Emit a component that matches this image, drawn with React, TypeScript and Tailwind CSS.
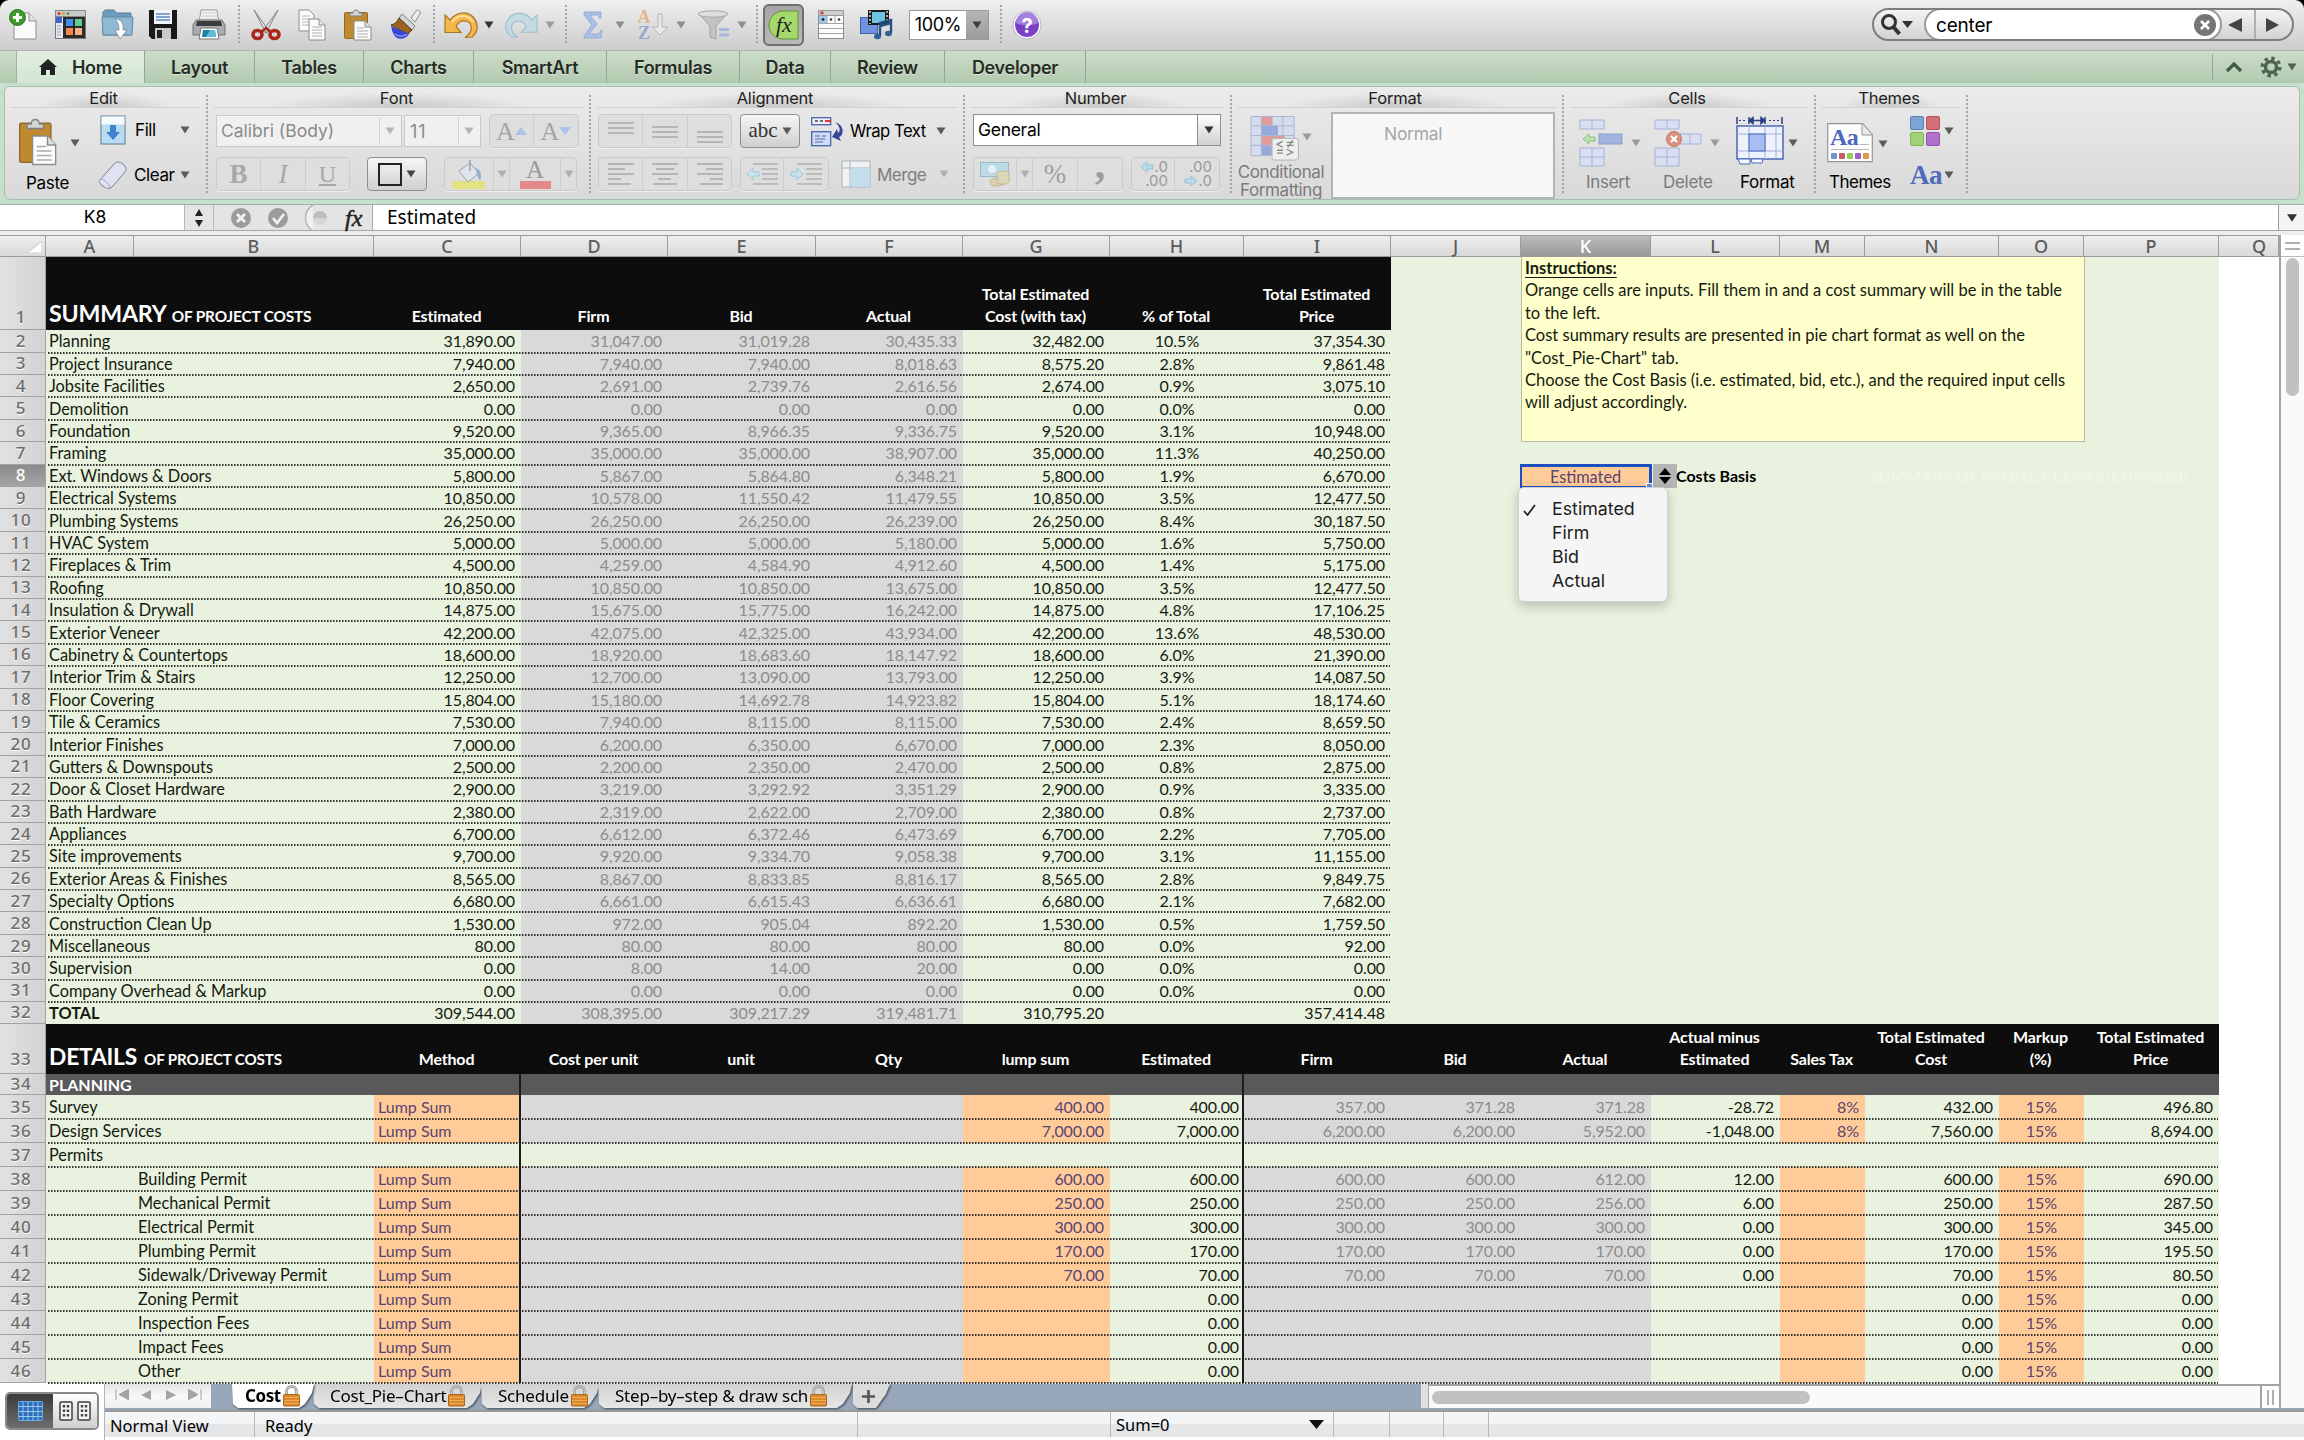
import type { ReactNode } from "react";
import { clsx } from "clsx";

const UI = "font-['Inter',sans-serif]";
const LUCIDA = "font-['Noto_Sans',sans-serif]";
const BODY = "font-['Lato',sans-serif]";

const GRID =
  "grid grid-rows-[100%] grid-cols-[46px_88px_240px_147px_147px_148px_147px_147px_134px_147px_130px_130px_129px_85px_134px_85px_135px_60px]";

const LETTERS = "ABCDEFGHIJKLMNOPQ".split("");

// label, estimated, firm, bid, actual, total cost, % of total, total price
const SUMMARY: string[][] = [
  ["Planning", "31,890.00", "31,047.00", "31,019.28", "30,435.33", "32,482.00", "10.5%", "37,354.30"],
  ["Project Insurance", "7,940.00", "7,940.00", "7,940.00", "8,018.63", "8,575.20", "2.8%", "9,861.48"],
  ["Jobsite Facilities", "2,650.00", "2,691.00", "2,739.76", "2,616.56", "2,674.00", "0.9%", "3,075.10"],
  ["Demolition", "0.00", "0.00", "0.00", "0.00", "0.00", "0.0%", "0.00"],
  ["Foundation", "9,520.00", "9,365.00", "8,966.35", "9,336.75", "9,520.00", "3.1%", "10,948.00"],
  ["Framing", "35,000.00", "35,000.00", "35,000.00", "38,907.00", "35,000.00", "11.3%", "40,250.00"],
  ["Ext. Windows & Doors", "5,800.00", "5,867.00", "5,864.80", "6,348.21", "5,800.00", "1.9%", "6,670.00"],
  ["Electrical Systems", "10,850.00", "10,578.00", "11,550.42", "11,479.55", "10,850.00", "3.5%", "12,477.50"],
  ["Plumbing Systems", "26,250.00", "26,250.00", "26,250.00", "26,239.00", "26,250.00", "8.4%", "30,187.50"],
  ["HVAC System", "5,000.00", "5,000.00", "5,000.00", "5,180.00", "5,000.00", "1.6%", "5,750.00"],
  ["Fireplaces & Trim", "4,500.00", "4,259.00", "4,584.90", "4,912.60", "4,500.00", "1.4%", "5,175.00"],
  ["Roofing", "10,850.00", "10,850.00", "10,850.00", "13,675.00", "10,850.00", "3.5%", "12,477.50"],
  ["Insulation & Drywall", "14,875.00", "15,675.00", "15,775.00", "16,242.00", "14,875.00", "4.8%", "17,106.25"],
  ["Exterior Veneer", "42,200.00", "42,075.00", "42,325.00", "43,934.00", "42,200.00", "13.6%", "48,530.00"],
  ["Cabinetry & Countertops", "18,600.00", "18,920.00", "18,683.60", "18,147.92", "18,600.00", "6.0%", "21,390.00"],
  ["Interior Trim & Stairs", "12,250.00", "12,700.00", "13,090.00", "13,793.00", "12,250.00", "3.9%", "14,087.50"],
  ["Floor Covering", "15,804.00", "15,180.00", "14,692.78", "14,923.82", "15,804.00", "5.1%", "18,174.60"],
  ["Tile & Ceramics", "7,530.00", "7,940.00", "8,115.00", "8,115.00", "7,530.00", "2.4%", "8,659.50"],
  ["Interior Finishes", "7,000.00", "6,200.00", "6,350.00", "6,670.00", "7,000.00", "2.3%", "8,050.00"],
  ["Gutters & Downspouts", "2,500.00", "2,200.00", "2,350.00", "2,470.00", "2,500.00", "0.8%", "2,875.00"],
  ["Door & Closet Hardware", "2,900.00", "3,219.00", "3,292.92", "3,351.29", "2,900.00", "0.9%", "3,335.00"],
  ["Bath Hardware", "2,380.00", "2,319.00", "2,622.00", "2,709.00", "2,380.00", "0.8%", "2,737.00"],
  ["Appliances", "6,700.00", "6,612.00", "6,372.46", "6,473.69", "6,700.00", "2.2%", "7,705.00"],
  ["Site improvements", "9,700.00", "9,920.00", "9,334.70", "9,058.38", "9,700.00", "3.1%", "11,155.00"],
  ["Exterior Areas & Finishes", "8,565.00", "8,867.00", "8,833.85", "8,816.17", "8,565.00", "2.8%", "9,849.75"],
  ["Specialty Options", "6,680.00", "6,661.00", "6,615.43", "6,636.61", "6,680.00", "2.1%", "7,682.00"],
  ["Construction Clean Up", "1,530.00", "972.00", "905.04", "892.20", "1,530.00", "0.5%", "1,759.50"],
  ["Miscellaneous", "80.00", "80.00", "80.00", "80.00", "80.00", "0.0%", "92.00"],
  ["Supervision", "0.00", "8.00", "14.00", "20.00", "0.00", "0.0%", "0.00"],
  ["Company Overhead & Markup", "0.00", "0.00", "0.00", "0.00", "0.00", "0.0%", "0.00"],
  ["TOTAL", "309,544.00", "308,395.00", "309,217.29", "319,481.71", "310,795.20", "", "357,414.48"],
];

type Detail = {
  label: string;
  indent?: boolean;
  blank?: boolean;
  // lump sum, estimated, firm, bid, actual, actual - est., tax, cost, markup, price
  v: string[];
};

const DETAILS: Detail[] = [
  { label: "Survey", v: ["400.00", "400.00", "357.00", "371.28", "371.28", "-28.72", "8%", "432.00", "15%", "496.80"] },
  { label: "Design Services", v: ["7,000.00", "7,000.00", "6,200.00", "6,200.00", "5,952.00", "-1,048.00", "8%", "7,560.00", "15%", "8,694.00"] },
  { label: "Permits", blank: true, v: ["", "", "", "", "", "", "", "", "", ""] },
  { label: "Building Permit", indent: true, v: ["600.00", "600.00", "600.00", "600.00", "612.00", "12.00", "", "600.00", "15%", "690.00"] },
  { label: "Mechanical Permit", indent: true, v: ["250.00", "250.00", "250.00", "250.00", "256.00", "6.00", "", "250.00", "15%", "287.50"] },
  { label: "Electrical Permit", indent: true, v: ["300.00", "300.00", "300.00", "300.00", "300.00", "0.00", "", "300.00", "15%", "345.00"] },
  { label: "Plumbing Permit", indent: true, v: ["170.00", "170.00", "170.00", "170.00", "170.00", "0.00", "", "170.00", "15%", "195.50"] },
  { label: "Sidewalk/Driveway Permit", indent: true, v: ["70.00", "70.00", "70.00", "70.00", "70.00", "0.00", "", "70.00", "15%", "80.50"] },
  { label: "Zoning Permit", indent: true, v: ["", "0.00", "", "", "", "", "", "0.00", "15%", "0.00"] },
  { label: "Inspection Fees", indent: true, v: ["", "0.00", "", "", "", "", "", "0.00", "15%", "0.00"] },
  { label: "Impact Fees", indent: true, v: ["", "0.00", "", "", "", "", "", "0.00", "15%", "0.00"] },
  { label: "Other", indent: true, v: ["", "0.00", "", "", "", "", "", "0.00", "15%", "0.00"] },
];

/* ---------- small shared bits ---------- */

function Caret({ className = "", color = "#5b5b5b" }: { className?: string; color?: string }) {
  return (
    <svg width="10" height="8" viewBox="0 0 10 8" className={clsx("shrink-0", className)}>
      <path d="M.5.5h9L5 7.5z" fill={color} />
    </svg>
  );
}

function Dots({ className = "" }: { className?: string }) {
  return (
    <div
      className={clsx(
        "w-[2px] shrink-0 bg-[repeating-linear-gradient(to_bottom,#a3a3a3_0_2px,transparent_2px_4px)]",
        className
      )}
    />
  );
}

/* ---------- toolbar icons ---------- */

const NewDoc = () => (
  <svg width="28" height="32" viewBox="0 0 28 32">
    <path d="M5 4h15l7 8v18H5z" fill="#fbfbfb" stroke="#8d8d8d" />
    <path d="M20 4v8h7" fill="#e4e4e4" stroke="#8d8d8d" />
    <circle cx="8.5" cy="8.5" r="8" fill="#3f9a2c" stroke="#2c7420" />
    <path d="M8.500 4v9M4 8.500h9" stroke="#fff" strokeWidth="3" />
  </svg>
);

const Gallery = () => (
  <svg width="31" height="30" viewBox="0 0 31 30">
    <rect x=".5" y=".5" width="30" height="28" fill="#e9e9e9" stroke="#777" />
    <rect x=".5" y=".5" width="30" height="6" fill="#c9c9c9" stroke="#888" />
    <circle cx="4" cy="3.500" r="1.500" fill="#d33" />
    <circle cx="8.500" cy="3.500" r="1.500" fill="#e0a52b" />
    <circle cx="13" cy="3.500" r="1.500" fill="#4aa33e" />
    <rect x="1" y="7" width="6" height="6" fill="#3d62d8" />
    <path d="M2 16h4M2 19h4M2 22h4M2 25h4" stroke="#8aa0d8" />
    <rect x="8" y="7" width="22" height="21" fill="#2b2b2b" />
    <rect x="11" y="9" width="7" height="7" fill="#3f8ff0" />
    <rect x="20" y="9" width="7" height="7" fill="#5fd08c" />
    <rect x="11" y="18" width="7" height="7" fill="#f08a50" />
    <rect x="20" y="18" width="7" height="7" fill="#f7b087" />
  </svg>
);

const FolderIn = () => (
  <svg width="33" height="31" viewBox="0 0 33 31">
    <path d="M2 6V3l2-2h9l2 3h15v22H2z" fill="#6f9cba" stroke="#557f9c" />
    <path d="M1 8h31l-1 18H2z" fill="#8fb8d2" stroke="#5d89a6" />
    <path d="M14 10c6 0 9 4 8 11h4l-7 9-5-9h4c0-5-1-8-4-11z" fill="#fff" stroke="#888" strokeWidth=".8" />
  </svg>
);

const Floppy = () => (
  <svg width="30" height="31" viewBox="0 0 30 31">
    <path d="M1 1h28v29H4l-3-3z" fill="#191919" />
    <rect x="6" y="1" width="18" height="14" fill="#f2f4f7" />
    <path d="M8 5h14M8 8h14M8 11h14" stroke="#5f86c4" strokeWidth="1.400" />
    <rect x="7" y="19" width="16" height="11" fill="#c9c9c9" />
    <rect x="9" y="21" width="5" height="8" fill="#222" />
  </svg>
);

const Printer = () => (
  <svg width="34" height="31" viewBox="0 0 34 31">
    <path d="M9 1h16l2 13H7z" fill="#f4f4f4" stroke="#9a9a9a" />
    <path d="M10 4h14M10 7h15M9 10h16" stroke="#c6c6c6" />
    <path d="M4 11h26l3 5v10H1V16z" fill="#a9adb1" stroke="#6f7276" />
    <path d="M5 12h24l1 5H4z" fill="#3a3d40" />
    <path d="M9 19h16l2 11H7z" fill="#fff" stroke="#777" />
    <path d="M11 21h12l1 7H10z" fill="#1d7fa8" />
    <path d="M14 28l4-7h5l1 7z" fill="#5cc0d8" />
  </svg>
);

const Scissors = () => (
  <svg width="30" height="32" viewBox="0 0 30 32">
    <path d="M3 1l15 21-3 2zM27 1L12 22l3 2z" fill="#e6e8ea" stroke="#7f8487" />
    <ellipse cx="6.500" cy="25.500" rx="4.500" ry="4" fill="none" stroke="#a8261c" strokeWidth="3.600" />
    <ellipse cx="23.500" cy="25.500" rx="4.500" ry="4" fill="none" stroke="#a8261c" strokeWidth="3.600" />
    <path d="M10 23l5-4 5 4" fill="none" stroke="#a8261c" strokeWidth="2.500" />
  </svg>
);

const CopyIcon = () => (
  <svg width="28" height="32" viewBox="0 0 28 32">
    <path d="M1 1h10l5 5v16H1z" fill="#fbfbfb" stroke="#8b8b8b" />
    <path d="M4 7h8M4 10h9M4 13h9M4 16h9" stroke="#b8b8b8" />
    <path d="M11 10h10l6 6v15H11z" fill="#fbfbfb" stroke="#8b8b8b" />
    <path d="M21 10v6h6" fill="#e5e5e5" stroke="#8b8b8b" />
    <path d="M14 18h10M14 21h10M14 24h10M14 27h10" stroke="#b0b0b0" />
  </svg>
);

function Clipboard({ w, h }: { w: number; h: number }) {
  return (
    <svg width={w} height={h} viewBox="0 0 28 32" preserveAspectRatio="none" className="shrink-0">
      <rect x=".5" y="3.500" width="23" height="26" rx="1" fill="#bf8a2e" stroke="#8f6a2a" />
      <path d="M6 7V4h3c0-4 6-4 6 0h3v3z" fill="#d4d4d4" stroke="#808080" />
      <path d="M10 12h11l6 6v13H10z" fill="#fbfbfb" stroke="#8b8b8b" />
      <path d="M21 12v6h6" fill="#e0e0e0" stroke="#8b8b8b" />
      <path d="M13 19h7M13 22h11M13 25h11M13 28h11" stroke="#adadad" />
    </svg>
  );
}

const Brush = () => (
  <svg width="32" height="31" viewBox="0 0 32 31">
    <path d="M22 9l5-7c2-2 5 0 4 3l-5 8z" fill="#ececec" stroke="#8a8a8a" />
    <path d="M13 5l13 12-3 4L10 9z" fill="#d5d8db" stroke="#7c7c7c" />
    <path d="M10 9l13 12-4 4L2 16c4-1 6-3 8-7z" fill="#9a6420" stroke="#5f3f16" />
    <path d="M2 17l18 8c-2 4-8 6-12 4-3-2-5-6-6-12z" fill="#3a44d8" />
    <path d="M6 25c4 3 9 3 12 0" stroke="#8c93f2" strokeWidth="1.500" fill="none" />
  </svg>
);

const Undo = () => (
  <svg width="34" height="29" viewBox="0 0 34 29">
    <path d="M1 5l5 5C13 1 24 1 30 8c5 6 4 14-2 19l-7 .5c8-5 8-14 2-16-5-1.500-9 1-11 5l5 6H1z" fill="#f5b74a" stroke="#a9742b" strokeWidth="1.200" />
    <path d="M8 12c6-8 16-8 21 0" fill="none" stroke="#fbe0a4" strokeWidth="1.800" />
  </svg>
);

const Redo = () => (
  <svg width="33" height="29" viewBox="0 0 34 29" className="-scale-x-100">
    <path d="M1 5l5 5C13 1 24 1 30 8c5 6 4 14-2 19l-7 .5c8-5 8-14 2-16-5-1.500-9 1-11 5l5 6H1z" fill="#c4dbe6" stroke="#a2bfcd" strokeWidth="1.200" />
  </svg>
);

const Sigma = () => (
  <svg width="20" height="28" viewBox="0 0 20 28">
    <path d="M1 1h17v6h-2c0-2-1-3-3-3H7l7 9-8 10h8c2 0 3-1 4-4h1l-1 8H1v-2l8-11L1 4z" fill="#a9bfe6" stroke="#8fa6d0" strokeWidth=".8" />
  </svg>
);

const SortAZ = () => (
  <div className="flex items-center">
    <div className="flex w-[14px] flex-col items-center font-['Liberation_Serif',serif] text-[18px] leading-[16px] font-bold">
      <span className="text-[#dfb58d]">A</span>
      <span className="text-[#93a8d2]">Z</span>
    </div>
    <svg width="18" height="24" viewBox="0 0 18 24">
      <path d="M7 1h4v13h6l-8 8-8-8h6z" fill="#e8e8e8" stroke="#b5b5b5" />
    </svg>
  </div>
);

const Filter = () => (
  <svg width="33" height="30" viewBox="0 0 33 30">
    <path d="M2 4l11 12v11l6 2V16L30 4z" fill="#c3c3c3" stroke="#a3a3a3" />
    <ellipse cx="16" cy="4" rx="15" ry="3.200" fill="#dedede" stroke="#a8a8a8" />
    <path d="M22 19.500h10M22 25h10" stroke="#a9b7de" strokeWidth="3" />
  </svg>
);

const FormulaBuilder = () => (
  <div className="flex h-[42px] w-[41px] items-center justify-center rounded-[6px] border-2 border-[#6f6f6f] bg-gradient-to-b from-[#a5a5a5] to-[#b9b9b9]">
    <svg width="31" height="30" viewBox="0 0 31 30">
      <path d="M13 1h17v28H13C5 27 1 21 1 15S5 3 13 1z" fill="#a6d96c" stroke="#5f8f3b" />
      <text x="8" y="22" fontFamily="Liberation Serif" fontStyle="italic" fontSize="22" fill="#222">fx</text>
    </svg>
  </div>
);

const Toolbox = () => (
  <svg width="26" height="30" viewBox="0 0 26 30">
    <rect x=".5" y=".5" width="25" height="28" fill="#fcfcfc" stroke="#8c8c8c" />
    <rect x=".5" y=".5" width="25" height="5" fill="#cfcfcf" stroke="#999" />
    <circle cx="4" cy="3" r="1.800" fill="#d14a3f" />
    <rect x="1" y="6" width="8" height="7" fill="#9cc8ee" />
    <path d="M1 13.500h24M1 18.500h24M1 23.500h24M9 6v7M17 6v7" stroke="#a5a5a5" />
    <circle cx="5" cy="9.500" r="1.400" fill="#223" />
    <circle cx="13" cy="9.500" r="1.200" fill="#333" />
    <circle cx="21" cy="9.500" r="1.200" fill="#333" />
  </svg>
);

const Media = () => (
  <svg width="33" height="31" viewBox="0 0 33 31">
    <rect x=".5" y="8.500" width="17" height="16" fill="#6f93dd" stroke="#3e5fae" />
    <rect x="8" y="1" width="21" height="15" fill="#1a1a1a" />
    <rect x="12" y="3" width="13" height="11" fill="#6ec3e0" />
    <path d="M10 2v13M27 2v13" stroke="#ddd" strokeWidth="1.500" strokeDasharray="2 2" />
    <path d="M20 27V14l11-3v13M20 17l11-3" fill="none" stroke="#27507e" strokeWidth="2.400" />
    <ellipse cx="17.500" cy="27.500" rx="3.500" ry="2.800" fill="#2f6396" />
    <ellipse cx="28.500" cy="24.500" rx="3.500" ry="2.800" fill="#2f6396" />
  </svg>
);

const Help = () => (
  <svg width="30" height="30" viewBox="0 0 30 30">
    <circle cx="15" cy="15" r="14" fill="#fff" stroke="#b9b4c2" />
    <circle cx="15" cy="15" r="12" fill="#7a3fc4" />
    <path d="M4 13a11 11 0 0 1 22 0c-6 3-16 3-22 0z" fill="#a680df" />
    <text x="15" y="22.500" textAnchor="middle" fontFamily="Inter" fontSize="20" fontWeight="700" fill="#fff">?</text>
  </svg>
);

function Toolbar() {
  return (
    <div className="flex h-[51px] shrink-0 items-center rounded-t-[9px] border-b border-[#b3b3b3] bg-gradient-to-b from-[#efefef] to-[#cdcdcd] pb-[1px] pl-[9px] *:shrink-0">
      <NewDoc />
      <div className="ml-[18px]"><Gallery /></div>
      <div className="ml-[15px]"><FolderIn /></div>
      <div className="ml-[14px]"><Floppy /></div>
      <div className="ml-[14px]"><Printer /></div>
      <Dots className="ml-[12px] h-[40px]" />
      <div className="ml-[11px]"><Scissors /></div>
      <div className="ml-[17px]"><CopyIcon /></div>
      <div className="ml-[18px]"><Clipboard w={28} h={32} /></div>
      <div className="ml-[17px]"><Brush /></div>
      <Dots className="ml-[12px] h-[40px]" />
      <div className="ml-[9px]"><Undo /></div>
      <Caret className="ml-[6px]" color="#333" />
      <div className="ml-[11px]"><Redo /></div>
      <Caret className="ml-[7px]" color="#9d9d9d" />
      <Dots className="ml-[10px] h-[40px]" />
      <div className="ml-[16px]"><Sigma /></div>
      <Caret className="ml-[12px]" color="#8d8d8d" />
      <div className="ml-[12px]"><SortAZ /></div>
      <Caret className="ml-[7px]" color="#8d8d8d" />
      <div className="ml-[11px]"><Filter /></div>
      <Caret className="ml-[7px]" color="#8d8d8d" />
      <Dots className="ml-[9px] h-[40px]" />
      <div className="ml-[5px]"><FormulaBuilder /></div>
      <div className="ml-[14px]"><Toolbox /></div>
      <div className="ml-[16px]"><Media /></div>
      <div className="ml-[16px] flex h-[30px] w-[80px] items-center border border-[#9a9a9a] bg-white">
        <span className={clsx(UI, "w-[56px] text-center text-[18px] tracking-[-0.3px] text-black")}>100%</span>
        <div className="flex h-full flex-1 items-center justify-center bg-gradient-to-b from-[#b5b5b5] to-[#9c9c9c]">
          <Caret color="#3f3f3f" />
        </div>
      </div>
      <Dots className="ml-[11px] h-[40px]" />
      <div className="ml-[10px]"><Help /></div>

      <div className="mr-[10px] ml-auto flex h-[33px] w-[422px] items-center overflow-hidden rounded-full border-2 border-[#7d7d7d] bg-gradient-to-b from-[#f4f4f4] to-[#d2d2d2]">
        <svg width="34" height="24" viewBox="0 0 34 24" className="ml-[6px]">
          <circle cx="9" cy="9" r="6.500" fill="none" stroke="#333" strokeWidth="3" />
          <path d="M13.500 14l6 7" stroke="#333" strokeWidth="4" />
          <path d="M22 8h11l-5.500 7z" fill="#333" />
        </svg>
        <div className="ml-[10px] flex h-[33px] w-[298px] items-center rounded-full border-2 border-[#9a9a9a] bg-white pl-[10px]">
          <span className={clsx(UI, "pt-[3px] text-[19px] tracking-[-0.2px] text-black")}>center</span>
          <svg width="22" height="22" viewBox="0 0 22 22" className="mr-[4px] ml-auto">
            <circle cx="11" cy="11" r="11" fill="#767676" />
            <path d="M7 7l8 8M15 7l-8 8" stroke="#fff" strokeWidth="2.600" />
          </svg>
        </div>
        <svg width="14" height="14" viewBox="0 0 14 14" className="ml-[6px]"><path d="M14 0v14L0 7z" fill="#444" /></svg>
        <div className="ml-[12px] h-full w-[2px] bg-[#b0b0b0]" />
        <svg width="14" height="14" viewBox="0 0 14 14" className="ml-[10px]"><path d="M0 0v14l13-7z" fill="#444" /></svg>
      </div>
    </div>
  );
}

/* ---------- ribbon ---------- */

const tabCls = "flex h-full items-center justify-center border-r border-[#8fa893] text-[18px] font-semibold tracking-[-0.3px] text-[#262b26] [text-shadow:0_1px_0_rgba(255,255,255,.5)]";

function Tabs() {
  return (
    <div className={clsx(UI, "flex h-[32px] shrink-0 items-center bg-gradient-to-b from-[#cdddc9] to-[#b1c9af]")}>
      <div className="h-full w-[17px] border-r border-[#9db39f]" />
      <div className={clsx(tabCls, "w-[128px] gap-[15px] bg-gradient-to-b from-[#e2eedf] to-[#d2e5d3]")}>
        <svg width="18" height="16" viewBox="0 0 18 16">
          <path d="M9 0l9 8h-2v8h-5v-5H7v5H2V8H0z" fill="#222" />
        </svg>
        Home
      </div>
      <div className={clsx(tabCls, "w-[110px]")}>Layout</div>
      <div className={clsx(tabCls, "w-[109px]")}>Tables</div>
      <div className={clsx(tabCls, "w-[110px]")}>Charts</div>
      <div className={clsx(tabCls, "w-[133px]")}>SmartArt</div>
      <div className={clsx(tabCls, "w-[133px]")}>Formulas</div>
      <div className={clsx(tabCls, "w-[91px]")}>Data</div>
      <div className={clsx(tabCls, "w-[114px]")}>Review</div>
      <div className={clsx(tabCls, "w-[141px]")}>Developer</div>
      <div className="ml-auto h-[26px] w-px bg-[#8fa893]" />
      <svg width="18" height="12" viewBox="0 0 18 12" className="ml-[12px]">
        <path d="M2 10l7-7 7 7" fill="none" stroke="#43594a" strokeWidth="3.200" />
      </svg>
      <svg width="22" height="22" viewBox="0 0 22 22" className="ml-[17px]">
        <circle cx="11" cy="11" r="5.500" fill="none" stroke="#4d6353" strokeWidth="3.500" />
        <circle cx="11" cy="11" r="8.800" fill="none" stroke="#4d6353" strokeWidth="3.400" strokeDasharray="3.450 3.460" />
      </svg>
      <Caret className="mr-[7px] ml-[5px]" color="#4d6353" />
    </div>
  );
}

function Group({ title, className, children }: { title: string; className: string; children: ReactNode }) {
  return (
    <div className={clsx("flex shrink-0 flex-col", className)}>
      <div className="mx-[6px] flex h-[21px] items-center justify-center border-b border-[#d2d2d2] bg-[radial-gradient(ellipse_35%_70%_at_50%_100%,#c9c9c9,transparent)] pt-[2px] pr-[4px] text-[16.500px] tracking-[-0.2px] text-[#1d1d1d]">
        {title}
      </div>
      {children}
    </div>
  );
}

const off = "flex h-[34px] rounded-[4px] border border-[#cacaca] bg-[#dedede] shadow-[0_1px_0_#eee]";
const seg = "flex h-full items-center justify-center border-r border-[#cdcdcd] last:border-r-0";

function Lines({ x, w, y }: { x: number[]; w: number[]; y: number[] }) {
  return (
    <svg width="26" height="24" viewBox="0 0 26 24">
      {y.map((v, i) => (
        <path key={i} d={`M${x[i]} ${v}h${w[i]}`} stroke="#a8a8a8" strokeWidth="1.700" />
      ))}
    </svg>
  );
}

const IndentIcon = ({ right }: { right?: boolean }) => (
  <svg width="34" height="24" viewBox="0 0 34 24">
    <path d="M8 2h25M17 7h16M17 12h16M17 17h16M8 22h25" stroke="#b0b0b0" strokeWidth="1.700" />
    <path
      d={right ? "M14 12L8 6v4H2v4h6v4z" : "M2 12l6-6v4h6v4H8v4z"}
      fill="#cbe3ef"
      stroke="#9dc3d6"
    />
  </svg>
);

const DecimalIcon = ({ more }: { more?: boolean }) => (
  <div className="flex w-[30px] flex-col text-[15px] leading-[14px] text-[#9a9a9a]">
    <div className="flex items-center justify-end">
      {more && (
        <svg width="14" height="12" viewBox="0 0 14 12" className="mr-px">
          <path d="M1 6l6-5v3h6v4H7v3z" fill="#b9dceb" stroke="#94c3d8" />
        </svg>
      )}
      {more ? ".0" : ".00"}
    </div>
    <div className="flex items-center justify-end">
      {!more && (
        <svg width="14" height="12" viewBox="0 0 14 12" className="mr-px">
          <path d="M13 6L7 1v3H1v4h6v3z" fill="#b9dceb" stroke="#94c3d8" />
        </svg>
      )}
      {more ? ".00" : ".0"}
    </div>
  </div>
);

function Ribbon() {
  return (
    <div className={clsx(UI, "shrink-0 bg-[#c6e0cd] px-[4px] pt-[3px] pb-[4px]")}>
      <div className="flex h-[114px] overflow-hidden rounded-[6px] border border-[#a9bfae] bg-gradient-to-b from-[#ebebeb] to-[#d9d9d9]">
        <Group title="Edit" className="w-[201px]">
          <div className="flex">
            <div className="flex w-[82px] flex-col pt-[10px]">
              <div className="flex items-center pl-[14px]">
                <Clipboard w={38} h={48} />
                <Caret className="mt-[2px] ml-[13px]" />
              </div>
              <span className="mt-[5px] pl-[21px] text-[17px] leading-[24px] tracking-[-0.3px] text-black">Paste</span>
            </div>
            <div className="flex flex-col pt-[7px] pl-[12px] text-[17px] tracking-[-0.4px] text-black">
              <div className="flex h-[30px] items-center">
                <svg width="26" height="30" viewBox="0 0 26 30" className="ml-px">
                  <rect x="1" y="1" width="24" height="28" fill="#b9dcf3" stroke="#5b7b92" />
                  <rect x="1.500" y="1.500" width="23" height="8" fill="#f4fafd" />
                  <path d="M10 10h6v7h4l-7 8-7-8h4z" fill="#3f83cf" />
                </svg>
                <span className="ml-[9px] w-[45px] pt-[2px]">Fill</span>
                <Caret />
              </div>
              <div className="mt-[15px] flex h-[30px] items-center">
                <svg width="28" height="28" viewBox="0 0 28 28">
                  <path d="M1 19L15 3c3-3 6-2 9 0 3 3 4 5 2 8L13 26c-3 3-6 1-9-1-3-2-5-4-3-6z" fill="#dfe3f2" stroke="#7b8096" />
                  <path d="M2 18c4 1 8 4 9 9" stroke="#9aa0ba" fill="none" />
                </svg>
                <span className="ml-[7px] w-[46px] pt-[2px]">Clear</span>
                <Caret />
              </div>
            </div>
          </div>
        </Group>
        <Dots className="mt-[8px] h-[98px]" />

        <Group title="Font" className="w-[381px]">
          <div className="flex pt-[7px] pl-[8px] text-[18px] text-[#8a8a8a]">
            <div className="flex h-[32px] w-[186px] items-center border border-[#c9c9c9] bg-[#f0f0f0]">
              <span className="w-[163px] border-r border-[#d0d0d0] pl-[4px] text-[17.500px]">Calibri (Body)</span>
              <Caret className="ml-[5px]" color="#b5b5b5" />
            </div>
            <div className="ml-[2px] flex h-[32px] w-[77px] items-center border border-[#c9c9c9] bg-[#f0f0f0]">
              <span className="w-[54px] border-r border-[#d0d0d0] pl-[5px] tracking-[1px]">11</span>
              <Caret className="ml-[5px]" color="#b5b5b5" />
            </div>
            <div className={clsx(off, "-mt-px ml-[8px] w-[90px] font-['Liberation_Serif',serif] text-[26px] text-[#a5a5a5]")}>
              <div className={clsx(seg, "w-[44px]")}>
                A<svg width="12" height="8" viewBox="0 0 12 8"><path d="M0 8h12L6 0z" fill="#a9c4e6" /></svg>
              </div>
              <div className={clsx(seg, "flex-1")}>
                A<svg width="12" height="8" viewBox="0 0 12 8"><path d="M0 0h12L6 8z" fill="#a9c4e6" /></svg>
              </div>
            </div>
          </div>
          <div className="flex pt-[9px] pl-[8px] font-['Liberation_Serif',serif] text-[27px] text-[#a8a8a8]">
            <div className={clsx(off, "w-[134px]")}>
              <div className={clsx(seg, "w-[44px] font-bold")}>B</div>
              <div className={clsx(seg, "w-[45px] italic")}>I</div>
              <div className={clsx(seg, "flex-1 text-[24px] underline")}>U</div>
            </div>
            <div className="ml-[17px] flex h-[34px] w-[60px] items-center rounded-[4px] border border-[#8f8f8f] bg-gradient-to-b from-[#f6f6f6] to-[#cfcfcf] pl-[10px]">
              <div className="h-[23px] w-[24px] border-2 border-[#222]" />
              <Caret className="ml-[4px]" color="#444" />
            </div>
            <div className={clsx(off, "ml-[17px] w-[133px]")}>
              <div className={clsx(seg, "w-[49px]")}>
                <svg width="34" height="30" viewBox="0 0 34 30">
                  <rect x="0" y="22" width="33" height="8" fill="#e3e384" />
                  <path d="M7 12l11-8 9 10-11 9z" fill="#dfe5ea" stroke="#98a4ae" />
                  <path d="M18 12V1" stroke="#98a4ae" strokeWidth="1.500" />
                  <path d="M24 9c5 2 6 7 4 13l-3-6z" fill="#8fb0cf" />
                </svg>
              </div>
              <div className={clsx(seg, "w-[16px]")}><Caret color="#b0b0b0" /></div>
              <div className={clsx(seg, "w-[51px]")}>
                <div className="flex w-[31px] flex-col items-center border-b-8 border-[#e38a8a] text-[25px] leading-[22px] text-[#9a9a9a]">A</div>
              </div>
              <div className={clsx(seg, "flex-1")}><Caret color="#b0b0b0" /></div>
            </div>
          </div>
        </Group>
        <Dots className="mt-[8px] h-[98px]" />

        <Group title="Alignment" className="w-[372px]">
          <div className="flex items-center pt-[6px] pl-[7px]">
            <div className={clsx(off, "w-[134px]")}>
              <div className={clsx(seg, "w-[44px]")}><Lines x={[0, 0, 0]} w={[26, 26, 26]} y={[4, 9, 14]} /></div>
              <div className={clsx(seg, "w-[45px]")}><Lines x={[0, 0, 0]} w={[26, 26, 26]} y={[8, 13, 18]} /></div>
              <div className={clsx(seg, "flex-1")}><Lines x={[0, 0, 0]} w={[26, 26, 26]} y={[13, 18, 23]} /></div>
            </div>
            <div className="ml-[8px] flex h-[34px] w-[60px] items-center justify-center gap-[4px] rounded-[4px] border border-[#8f8f8f] bg-gradient-to-b from-[#f6f6f6] to-[#cfcfcf] font-['Liberation_Serif',serif] text-[21px] text-[#333]">
              abc<Caret />
            </div>
            <svg width="34" height="32" viewBox="0 0 34 32" className="ml-[11px]">
              <rect x=".7" y="2.700" width="19" height="7" fill="#eef1fb" stroke="#4a62a8" strokeWidth="1.300" />
              <path d="M4 6h3M9 6h3" stroke="#444" strokeWidth="1.500" />
              <path d="M14 6h6" stroke="#d33" strokeWidth="1.800" />
              <rect x=".7" y="16.700" width="19" height="14" fill="#cfdcf8" stroke="#4a62a8" strokeWidth="1.300" />
              <path d="M4 21h5M11 21h4M4 24h10M4 27h8" stroke="#5a6a9a" />
              <path d="M24 7c10 3 9 14 4 15l2 4-9-4 5-8 1 4c3-2 2-7-3-11z" fill="#35489a" />
            </svg>
            <span className="ml-[5px] w-[86px] pt-px text-[16.700px] tracking-[-0.5px] text-black">Wrap Text</span>
            <Caret />
          </div>
          <div className="flex items-center pt-[9px] pl-[7px]">
            <div className={clsx(off, "w-[134px]")}>
              <div className={clsx(seg, "w-[44px]")}><Lines x={[0, 0, 0, 0, 0]} w={[26, 17, 26, 13, 23]} y={[2, 7, 12, 17, 22]} /></div>
              <div className={clsx(seg, "w-[45px]")}><Lines x={[0, 4, 0, 6, 1]} w={[26, 18, 26, 13, 24]} y={[2, 7, 12, 17, 22]} /></div>
              <div className={clsx(seg, "flex-1")}><Lines x={[0, 9, 0, 13, 3]} w={[26, 17, 26, 13, 23]} y={[2, 7, 12, 17, 22]} /></div>
            </div>
            <div className={clsx(off, "ml-[8px] w-[89px]")}>
              <div className={clsx(seg, "w-[43px]")}><IndentIcon /></div>
              <div className={clsx(seg, "flex-1")}><IndentIcon right /></div>
            </div>
            <svg width="30" height="28" viewBox="0 0 30 28" className="ml-[12px]">
              <path d="M1 1h28v26H1zM1 8h28M9 1v26" fill="#eef2f5" stroke="#a9b3ba" />
              <path d="M9.500 8.500h19v18h-19z" fill="#c5deee" />
            </svg>
            <span className="ml-[6px] w-[58px] pt-[3px] text-[17px] tracking-[-0.5px] text-[#7d7d7d]">Merge</span>
            <Caret className="ml-[4px]" color="#b0b0b0" />
          </div>
        </Group>
        <Dots className="mt-[8px] h-[98px]" />

        <Group title="Number" className="w-[265px]">
          <div className="flex pt-[6px] pl-[8px]">
            <div className="flex h-[32px] w-[248px] items-center border border-[#8f8f8f] bg-white">
              <span className="flex-1 pl-[4px] text-[17.500px] tracking-[-0.3px] text-black">General</span>
              <div className="flex h-full w-[23px] items-center justify-center border-l border-[#8f8f8f] bg-gradient-to-b from-white to-[#d0d0d0]">
                <Caret color="#333" />
              </div>
            </div>
          </div>
          <div className="flex pt-[11px] pl-[8px] text-[#9d9d9d]">
            <div className={clsx(off, "w-[150px]")}>
              <div className={clsx(seg, "w-[43px]")}>
                <svg width="30" height="26" viewBox="0 0 30 26">
                  <rect x=".5" y="1.500" width="28" height="14" fill="#bcdbe6" stroke="#96bccb" />
                  <circle cx="12" cy="8" r="4" fill="#e4f1f5" />
                  <ellipse cx="17" cy="21" rx="7" ry="4" fill="#d9d3b4" stroke="#c0b68c" />
                  <ellipse cx="23" cy="13" rx="6" ry="3" fill="#e2dcbd" stroke="#c0b68c" />
                  <path d="M17 13v8c2 3 10 3 12 0v-8" fill="#ddd6b6" stroke="#c0b68c" />
                </svg>
              </div>
              <div className={clsx(seg, "w-[16px]")}><Caret color="#b0b0b0" /></div>
              <div className={clsx(seg, "w-[45px] font-['Liberation_Serif',serif] text-[27px]")}>%</div>
              <div className={clsx(seg, "flex-1 pb-[20px] font-['Liberation_Serif',serif] text-[42px] leading-[34px] font-bold")}>,</div>
            </div>
            <div className={clsx(off, "ml-[8px] w-[89px]")}>
              <div className={clsx(seg, "w-[43px]")}><DecimalIcon more /></div>
              <div className={clsx(seg, "flex-1")}><DecimalIcon /></div>
            </div>
          </div>
        </Group>
        <Dots className="mt-[8px] h-[98px]" />

        <Group title="Format" className="w-[330px]">
          <div className="flex">
            <div className="flex w-[98px] flex-col pt-[8px] text-[17px] leading-[18px] tracking-[-0.4px] text-[#7b7b7b]">
              <div className="flex items-center pl-[18px]">
                <svg width="50" height="45" viewBox="0 0 50 46">
                  <path d="M.5.5h44v40H.5z" fill="#d5dced" />
                  <rect x="11" y="0" width="11" height="10" fill="#e49a98" />
                  <rect x="11" y="10" width="17" height="10" fill="#95a9dc" />
                  <rect x="11" y="20" width="24" height="10" fill="#e49a98" />
                  <rect x="11" y="30" width="14" height="10" fill="#95a9dc" />
                  <path d="M.5.5h44v40H.5zM.5 10h44M.5 20h44M.5 30h44M11 0v40M22 0v40M33 0v40" fill="none" stroke="#a9b5d2" />
                  <rect x="22" y="23" width="27" height="22" rx="2" fill="#eee" stroke="#b4b4b4" />
                  <path d="M33 26l-6 3 6 3M27 35h6M27 38h6M37 27h7M37 30h7M43 25l-5 7M37 34l6 3-6 3" fill="none" stroke="#858585" strokeWidth="1.300" />
                </svg>
                <Caret className="-mt-[4px] ml-[2px]" color="#9a9a9a" />
              </div>
              <div className="mt-[2px] text-center">Conditional Formatting</div>
            </div>
            <div className="mt-[4px] ml-px h-[87px] w-[224px] border-2 border-[#b3b3b3] bg-[#f7f7f7] pt-[7px] pl-[51px] text-[17.500px] tracking-[-0.3px] text-[#a6a6a6]">
              Normal
            </div>
          </div>
        </Group>
        <Dots className="mt-[8px] h-[98px]" />

        <Group title="Cells" className="w-[250px]">
          <div className="flex pt-[10px] text-[17px] tracking-[-0.3px] text-[#7b7b7b]">
            <div className="ml-[15px] w-[75px]">
              <div className="flex items-center">
                <svg width="44" height="49" viewBox="0 0 44 49">
                  <path d="M1 2h24v9H1zM13 2v9M1 30h24v18H1zM13 30v18M1 39h24" fill="#d9dff0" stroke="#a7b3d6" />
                  <rect x="20" y="16" width="23" height="10" fill="#9fb2e0" stroke="#8b9ed0" />
                  <path d="M4 21l6-5v3h6v4h-6v3z" fill="#bfe0b5" stroke="#8dc07f" />
                </svg>
                <Caret className="ml-[8px]" color="#9a9a9a" />
              </div>
              <div className="mt-[3px] pl-[7px] leading-[24px]">Insert</div>
            </div>
            <div className="w-[82px]">
              <div className="flex items-center">
                <svg width="48" height="49" viewBox="0 0 48 49">
                  <path d="M1 2h24v9H1zM13 2v9M1 30h24v18H1zM13 30v18M1 39h24M26 16h21v10H26zM36 16v10" fill="#d9dff0" stroke="#a7b3d6" />
                  <circle cx="20" cy="21" r="7.500" fill="#d99181" stroke="#c27563" />
                  <path d="M17 18l6 6M23 18l-6 6" stroke="#fff" strokeWidth="2.200" />
                </svg>
                <Caret className="ml-[8px]" color="#9a9a9a" />
              </div>
              <div className="mt-[3px] pl-[9px] leading-[24px]">Delete</div>
            </div>
            <div className="w-[72px]">
              <div className="flex items-center">
                <svg width="48" height="49" viewBox="0 0 48 49" className="-mt-[2px] mb-[2px]">
                  <path d="M1 1v7M46 1v7M13 1v7M29 1v7" stroke="#2c3f80" strokeWidth="1.500" />
                  <path d="M3 4.500h7M33 4.500h11" stroke="#2c3f80" strokeDasharray="2 2" />
                  <path d="M13 4.500h16M13 4.500l4-3v6zM29 4.500l-4-3v6z" stroke="#2c3f80" strokeWidth="1.500" fill="#2c3f80" />
                  <rect x="1" y="10" width="46" height="33" fill="#eef2fd" stroke="#4a66b8" strokeWidth="1.500" />
                  <path d="M1 18h46M1 35h46M13 10v33M29 10v33M40 10v33" stroke="#9dafe2" />
                  <rect x="13" y="18" width="16" height="17" fill="#a9bdf2" stroke="#4a66b8" />
                  <path d="M2 43h12v5H4zM15 43h12l-1 4H16z" fill="#f6f8ff" stroke="#4a66b8" />
                </svg>
                <Caret className="ml-[4px]" />
              </div>
              <div className="mt-[3px] pl-[4px] leading-[24px] text-black">Format</div>
            </div>
          </div>
        </Group>
        <Dots className="mt-[8px] h-[98px]" />

        <Group title="Themes" className="w-[150px]">
          <div className="flex pt-[8px] text-[17px] tracking-[-0.5px] text-black">
            <div className="ml-[11px] w-[83px]">
              <div className="flex h-[51px] items-center pt-[2px]">
                <svg width="46" height="42" viewBox="0 0 46 42">
                  <path d="M.7 1.700h35l9.600 11v27H.7z" fill="#fdfdfd" stroke="#969696" strokeWidth="1.200" />
                  <path d="M35 2v11h10" fill="#e8e8e8" stroke="#969696" />
                  <text x="3" y="23" fontFamily="Liberation Serif" fontWeight="700" fontSize="24" fill="#4c68ba">Aa</text>
                  <path d="M4 27.500h38M33 22.500h9" stroke="#b9b9b9" />
                  <rect x="4" y="31" width="6" height="6" rx="1" fill="#6d94cc" />
                  <rect x="12" y="31" width="6" height="6" rx="1" fill="#cc5a66" />
                  <rect x="20" y="31" width="6" height="6" rx="1" fill="#93cc5d" />
                  <rect x="28" y="31" width="6" height="6" rx="1" fill="#a05fc4" />
                  <rect x="36" y="31" width="6" height="6" rx="1" fill="#dd9a48" />
                </svg>
                <Caret className="mt-[2px] ml-[5px]" />
              </div>
              <div className="mt-[3px] pl-[2px] leading-[24px]">Themes</div>
            </div>
            <div className="flex flex-col">
              <div className="flex items-center">
                <svg width="30" height="30" viewBox="0 0 30 30">
                  <rect x=".5" y=".5" width="13" height="13" rx="1.500" fill="#7fa3d2" stroke="#5a82b8" />
                  <rect x="16.500" y=".5" width="13" height="13" rx="1.500" fill="#d26f78" stroke="#b84f5a" />
                  <rect x=".5" y="16.500" width="13" height="13" rx="1.500" fill="#a2d277" stroke="#7fb552" />
                  <rect x="16.500" y="16.500" width="13" height="13" rx="1.500" fill="#b073cc" stroke="#9152b0" />
                </svg>
                <Caret className="ml-[4px]" />
              </div>
              <div className="mt-[12px] flex items-center">
                <span className="w-[33px] font-['Liberation_Serif',serif] text-[27px] leading-[34px] font-bold tracking-[-0.5px] text-[#4f6cba]">Aa</span>
                <Caret className="ml-[1px]" />
              </div>
            </div>
          </div>
        </Group>
        <Dots className="mt-[8px] h-[98px]" />
      </div>
    </div>
  );
}

function FormulaBar() {
  return (
    <div className="flex h-[31px] shrink-0 flex-col border-t border-[#9fb0a4] bg-[#ededed]">
      <div className={clsx(LUCIDA, "flex h-[26px] items-center border-b border-[#a8a8a8] bg-[#e4e4e4] text-[19px] text-black")}>
        <div className={clsx(UI, "flex h-full w-[184px] items-center justify-center bg-white pl-[6px] text-[17.500px]")}>K8</div>
        <div className="flex h-full w-[30px] flex-col items-center justify-center gap-[4px] border-x border-[#b9b9b9]">
          <svg width="8" height="7" viewBox="0 0 8 7"><path d="M0 7h8L4 0z" fill="#222" /></svg>
          <svg width="8" height="7" viewBox="0 0 8 7"><path d="M0 0h8L4 7z" fill="#222" /></svg>
        </div>
        <svg width="20" height="20" viewBox="0 0 20 20" className="ml-[17px]">
          <circle cx="10" cy="10" r="10" fill="#9b9b9b" />
          <path d="M6 6l8 8M14 6l-8 8" stroke="#f2f2f2" strokeWidth="2.800" />
        </svg>
        <svg width="20" height="20" viewBox="0 0 20 20" className="ml-[17px]">
          <circle cx="10" cy="10" r="10" fill="#9b9b9b" />
          <path d="M5 10l4 5 7-9" stroke="#f2f2f2" strokeWidth="2.800" fill="none" />
        </svg>
        <svg width="30" height="26" viewBox="0 0 30 26" className="ml-[15px]">
          <path d="M10 0C0 6 0 20 10 26" fill="#efefef" stroke="#b5b5b5" strokeWidth="1.500" />
          <circle cx="17" cy="13" r="7" fill="#d6d6d6" />
          <path d="M10 13a7 7 0 0 1 14 0z" fill="#bdbdbd" />
        </svg>
        <span className="ml-[12px] w-[27px] font-['Liberation_Serif',serif] text-[24px] leading-[24px] text-[#222] italic [-webkit-text-stroke:.5px_#222]">fx</span>
        <div className="flex h-full flex-1 items-center border-l border-[#a8a8a8] bg-white pl-[14px]">Estimated</div>
        <div className="flex h-full w-[26px] items-center justify-center border-l border-[#9b9b9b] bg-[#f4f4f4]">
          <Caret color="#333" className="scale-110" />
        </div>
      </div>
    </div>
  );
}

/* ---------- sheet ---------- */

const hdrCell = "flex items-center justify-center border-r border-[#9d9d9d] text-[18px] leading-[18px] font-medium text-[#5c5c5c]";

function ColumnHeads() {
  return (
    <div className={clsx(GRID, LUCIDA, "h-[22px] shrink-0 border-y border-[#9a9a9a] bg-gradient-to-b from-[#efefef] to-[#d9d9d9]")}>
      <div className="flex items-end justify-end border-r border-[#9d9d9d] p-[3px]">
        <svg width="15" height="12" viewBox="0 0 15 12"><path d="M15 0v12H0z" fill="#fff" stroke="#bbb" strokeWidth=".8" /></svg>
      </div>
      {LETTERS.map((l) => (
        <div
          key={l}
          className={clsx(
            hdrCell,
            l === "K" && "bg-gradient-to-b from-[#bcbcbc] to-[#989898] text-white!",
            l === "Q" && "justify-end pr-[12px]"
          )}
        >
          {l}
        </div>
      ))}
    </div>
  );
}

const DOTTED =
  "z-[1] h-[2px] bg-[repeating-linear-gradient(to_right,rgba(20,20,20,.85)_0_1px,rgba(20,20,20,.45)_1px_2px,transparent_2px_3px)]";

function RowNo({ n, className }: { n: number; className?: string }) {
  return (
    <div
      className={clsx(
        LUCIDA,
        "flex justify-center border-r border-b border-[#a2a2a2] pr-[3px] text-[17px] leading-[20px] font-medium tracking-[0.8px]",
        n === 8
          ? "bg-gradient-to-b from-[#8b8b8b] to-[#a5a5a5] text-white"
          : "bg-gradient-to-r from-[#e2e2e2] to-[#d2d2d2] text-[#6d6d6d] [text-shadow:0_1px_0_#fff]",
        className ?? "items-center"
      )}
    >
      {n}
    </div>
  );
}

const gray = "bg-[#d9d9d9] text-[#8c8c8c]";
const green = "bg-[#e9f2de] text-[#141a10]";
const orange = "bg-[#ffcc99] text-[#5b4473]";
const num = "flex items-center justify-end pr-[6px] text-[16px] tracking-[-0.1px]";

function SummaryRow({ row, n }: { row: string[]; n: number }) {
  const [label, est, firm, bid, act, cost, pct, price] = row;
  const total = n === 32;
  return (
    <div className={clsx(GRID, "relative", n === 2 ? "h-[23.200px]" : total ? "h-[21.800px]" : "h-[22.400px]")}>
      <RowNo n={n} />
      <div className={clsx(green, "col-span-2 flex items-center pl-[3px] text-[16.300px]", total && "font-bold")}>{label}</div>
      <div className={clsx(num, green)}>{est}</div>
      <div className={clsx(num, gray)}>{firm}</div>
      <div className={clsx(num, gray)}>{bid}</div>
      <div className={clsx(num, gray)}>{act}</div>
      <div className={clsx(num, green)}>{cost}</div>
      <div className={clsx(green, "flex items-center justify-center text-[16px]")}>{pct}</div>
      <div className={clsx(num, green)}>{price}</div>
      <div className="col-span-7 bg-[#e9f2de]" />
      <div className="bg-white" />
      {!total && <div className={clsx("absolute -bottom-px left-[48px] w-[1342px]", DOTTED)} />}
    </div>
  );
}

function DetailRow({ d, n }: { d: Detail; n: number }) {
  const [lump, est, firm, bid, act, diff, tax, cost, mark, price] = d.v;
  const g = d.blank ? green : gray;
  const o = d.blank ? green : orange;
  return (
    <div className={clsx(GRID, "relative", n === 35 ? "h-[23.600px]" : "h-[24px]")}>
      <RowNo n={n} />
      <div className={clsx(green, "col-span-2 flex items-center text-[16.300px]", d.indent ? "pl-[92px]" : "pl-[3px]")}>{d.label}</div>
      <div className={clsx(o, "flex items-center border-r-2 border-[#1c1c1c] pl-[4px] text-[16px]")}>{d.blank ? "" : "Lump Sum"}</div>
      <div className={g} />
      <div className={g} />
      <div className={g} />
      <div className={clsx(num, o)}>{lump}</div>
      <div className={clsx(num, green, "border-r-2 border-[#1c1c1c] pr-[3px]!")}>{est}</div>
      <div className={clsx(num, g)}>{firm}</div>
      <div className={clsx(num, g)}>{bid}</div>
      <div className={clsx(num, g)}>{act}</div>
      <div className={clsx(num, green)}>{diff}</div>
      <div className={clsx(num, o)}>{tax}</div>
      <div className={clsx(num, green)}>{cost}</div>
      <div className={clsx(o, "flex items-center justify-center text-[16px]")}>{mark}</div>
      <div className={clsx(num, green)}>{price}</div>
      <div className="bg-white" />
      <div className={clsx("absolute -bottom-px left-[48px] w-[2170px]", DOTTED)} />
    </div>
  );
}

const head = "flex items-end justify-center pr-[2px] text-center text-[16px] leading-[22.400px] font-bold tracking-[-0.15px] text-white";

function Sheet() {
  return (
    <div className={clsx(BODY, "relative w-[2279px] leading-[20px] whitespace-nowrap")}>
      <div className={clsx(GRID, "h-[72.500px]")}>
        <RowNo n={1} className="items-end pb-[2px]" />
        <div className="col-span-9 grid grid-cols-subgrid bg-[#0d0d0d] pb-[2px]">
          <div className={clsx(head, "col-span-2 items-baseline-last! justify-start! gap-[5px] pl-[3px]")}>
            <span className="text-[23.200px] tracking-[-0.2px]">SUMMARY</span>
            <span className="text-[15.400px]">OF PROJECT COSTS</span>
          </div>
          <div className={head}>Estimated</div>
          <div className={head}>Firm</div>
          <div className={head}>Bid</div>
          <div className={head}>Actual</div>
          <div className={head}>Total Estimated<br />Cost (with tax)</div>
          <div className={head}>% of Total</div>
          <div className={head}>Total Estimated<br />Price</div>
        </div>
        <div className="col-span-7 bg-[#e9f2de]" />
        <div className="bg-white" />
      </div>
      {SUMMARY.map((r, i) => (
        <SummaryRow key={i} row={r} n={i + 2} />
      ))}

      <div className={clsx(GRID, "h-[50.600px]")}>
        <RowNo n={33} className="items-end pb-[4px]" />
        <div className="col-span-16 grid grid-cols-subgrid bg-[#0d0d0d] pb-[4px]">
          <div className={clsx(head, "col-span-2 items-baseline-last! justify-start! gap-[7px] pl-[3px]")}>
            <span className="text-[22.800px] tracking-[-0.2px]">DETAILS</span>
            <span className="text-[15.200px]">OF PROJECT COSTS</span>
          </div>
          <div className={head}>Method</div>
          <div className={head}>Cost per unit</div>
          <div className={head}>unit</div>
          <div className={head}>Qty</div>
          <div className={head}>lump sum</div>
          <div className={head}>Estimated</div>
          <div className={head}>Firm</div>
          <div className={head}>Bid</div>
          <div className={head}>Actual</div>
          <div className={head}>Actual minus<br />Estimated</div>
          <div className={head}>Sales Tax</div>
          <div className={head}>Total Estimated<br />Cost</div>
          <div className={head}>Markup<br />(%)</div>
          <div className={head}>Total Estimated<br />Price</div>
        </div>
        <div className="bg-white" />
      </div>
      <div className={clsx(GRID, "h-[21px]")}>
        <RowNo n={34} />
        <div className="col-span-3 flex items-center border-r-2 border-[#1c1c1c] bg-[#595959] pl-[3px] text-[16px] font-bold text-white">PLANNING</div>
        <div className="col-span-5 border-r-2 border-[#1c1c1c] bg-[#595959]" />
        <div className="col-span-8 bg-[#595959]" />
        <div className="bg-white" />
      </div>
      {DETAILS.map((d, i) => (
        <DetailRow key={i} d={d} n={i + 35} />
      ))}

      {/* floating text box */}
      <div className="absolute top-0 left-[1521px] h-[185px] w-[564px] border border-t-0 border-[#b9b9a0] bg-[#ffffcc] pl-[3px] text-[16.500px] leading-[22.400px] text-[#141a10]">
        <div className="font-bold underline underline-offset-3">Instructions:</div>
        <div>Orange cells are inputs. Fill them in and a cost summary will be in the table</div>
        <div>to the left.</div>
        <div>Cost summary results are presented in pie chart format as well on the</div>
        <div>"Cost_Pie-Chart" tab.</div>
        <div>Choose the Cost Basis (i.e. estimated, bid, etc.), and the required input cells</div>
        <div>will adjust accordingly.</div>
      </div>

      {/* active cell */}
      <div className="absolute top-[207px] left-[1520px] flex h-[24px] w-[132px] items-center justify-center border-2 border-t-3 border-r-3 border-[#1d4fc0] bg-[#ffcc99] text-[16.300px] text-[#5b4473]">
        Estimated
        <div className="absolute -right-[4px] -bottom-[3px] h-[6px] w-[7px] border border-white bg-[#5f8fe6]" />
      </div>
      <div className="absolute top-[207px] left-[1653px] flex h-[24px] w-[24px] flex-col items-center justify-center gap-[2px] bg-[#b5b5b5]">
        <svg width="12" height="7" viewBox="0 0 12 7"><path d="M0 7h12L6 0z" fill="#000" /></svg>
        <svg width="12" height="7" viewBox="0 0 12 7"><path d="M0 0h12L6 7z" fill="#000" /></svg>
      </div>
      <div className="absolute top-[207px] left-[1676px] text-[16px] leading-[23px] font-bold text-black">Costs Basis</div>
      <div className="absolute top-[207px] left-[1870px] text-[16px] leading-[23px] font-bold text-[#f0f5ea]">SUMMARY OF PROJECT COSTS (Estimated)</div>

      {/* validation list */}
      <div className={clsx(UI, "absolute top-[230px] left-[1518px] h-[115px] w-[150px] rounded-[6px] border border-[#cfcfcf] bg-[#f5f5f5] pt-[9px] pl-[33px] text-[17.800px] leading-[24px] text-[#1d1d1d] shadow-[0_4px_12px_rgba(0,0,0,.22)]")}>
        <svg width="13" height="12" viewBox="0 0 13 12" className="absolute top-[16px] left-[4px]">
          <path d="M1 7l3.500 4L12 1" fill="none" stroke="#1d1d1d" strokeWidth="1.700" />
        </svg>
        <div>Estimated</div>
        <div>Firm</div>
        <div>Bid</div>
        <div>Actual</div>
      </div>
    </div>
  );
}

function VScroll() {
  return (
    <div className="flex w-[25px] flex-col border-l-2 border-[#a3a3a3] bg-[#fafafa]">
      <div className="flex h-[22px] flex-col items-center justify-center gap-[4px] border-b border-[#b9b9b9] bg-white">
        <div className="h-[2px] w-[15px] bg-[#b0b0b0]" />
        <div className="h-[2px] w-[15px] bg-[#b0b0b0]" />
      </div>
      <div className="mx-auto mt-px h-[138px] w-[13px] rounded-full bg-[#c1c1c1]" />
    </div>
  );
}

/* ---------- bottom ---------- */

const Lock = () => (
  <svg width="17" height="22" viewBox="0 0 17 22" className="ml-[2px] shrink-0">
    <path d="M3.500 11V6.500a5 5 0 0 1 10 0V11" fill="none" stroke="#9b9b9b" strokeWidth="2.800" />
    <path d="M3.500 11V6.500a5 5 0 0 1 10 0V11" fill="none" stroke="#d5d5d5" strokeWidth="1" />
    <rect x=".5" y="9.500" width="16" height="11.500" rx="1" fill="#dd8a2c" stroke="#a8641a" />
    <path d="M1 12.500h15M1 15.500h15M1 18.500h15" stroke="#f0ae5c" strokeWidth=".9" />
  </svg>
);

function SheetTab({ label, className, active }: { label: string; className: string; active?: boolean }) {
  return (
    <div className={clsx("h-full shrink-0 drop-shadow-[1px_1px_1px_rgba(40,50,60,.8)]", className)}>
      <div
        className={clsx(
          "flex h-full items-center pb-px text-[17px] text-black [clip-path:polygon(0_0,100%_0,calc(100%-2px)_9px,calc(100%-9px)_20px,calc(100%-15px)_100%,6px_100%,1px_calc(100%-4px))]",
          active ? "bg-white pl-[13px] font-bold tracking-[-0.4px]" : "bg-gradient-to-b from-[#d2d2d2] to-[#e6e6e6] pl-[17px] tracking-[-0.22px]"
        )}
      >
        {label}
        <Lock />
      </div>
    </div>
  );
}

function Bottom() {
  return (
    <div className={clsx(LUCIDA, "flex h-[56px] shrink-0 bg-white text-black")}>
      <div className="flex w-[105px] items-start border-r border-[#b3b3b3] bg-white pt-[8px] pl-[5px]">
        <div className="flex h-[38px] w-[94px] overflow-hidden rounded-[5px] border-2 border-[#8a8a8a]">
          <div className="flex w-[46px] items-center justify-center bg-gradient-to-b from-[#3b3b3b] to-[#6e6e6e]">
            <svg width="25" height="20" viewBox="0 0 25 20">
              <rect x=".5" y=".5" width="24" height="19" rx="1" fill="#2d6fb8" stroke="#69aae4" />
              <path d="M1 5.500h23M1 10.500h23M1 15.500h23M5 1v18M10 1v18M15 1v18M20 1v18" stroke="#9cc9ee" />
            </svg>
          </div>
          <div className="flex flex-1 items-center justify-center gap-[4px] bg-gradient-to-b from-white to-[#cfcfcf]">
            {[0, 1].map((k) => (
              <svg key={k} width="14" height="20" viewBox="0 0 14 20">
                <rect x="1" y="1" width="12" height="18" rx="1" fill="#f3f3f3" stroke="#3f3f3f" strokeWidth="1.500" />
                <path d="M5 4v12M9 4v12" stroke="#444" strokeWidth="2.400" strokeDasharray="2.500 2" />
              </svg>
            ))}
          </div>
        </div>
      </div>
      <div className="flex flex-1 flex-col">
        <div className="flex h-[28px] border-b-2 border-[#9a9a9a] bg-[#97a6b9] pb-[2px]">
          <div className="flex w-[106px] items-center justify-center gap-[12px] bg-gradient-to-b from-[#e6e6e6] via-[#f8f8f8] to-[#f0f0f0] pb-[3px]">
            <svg width="14" height="11" viewBox="0 0 14 11"><path d="M1 0v11M14 0v11L4 5.500z" fill="#a3a3a3" stroke="#a3a3a3" strokeWidth="1" /></svg>
            <svg width="10" height="10" viewBox="0 0 10 10"><path d="M10 0v10L0 5z" fill="#a3a3a3" /></svg>
            <svg width="10" height="10" viewBox="0 0 10 10" className="ml-[3px]"><path d="M0 0v10l10-5z" fill="#a3a3a3" /></svg>
            <svg width="14" height="11" viewBox="0 0 14 11"><path d="M13 0v11M0 0v11l10-5.500z" fill="#a3a3a3" stroke="#a3a3a3" strokeWidth="1" /></svg>
          </div>
          <SheetTab label="Cost" active className="z-10 ml-[21px] w-[82px]" />
          <SheetTab label="Cost_Pie–Chart" className="-ml-[1px] w-[169px]" />
          <SheetTab label="Schedule" className="-ml-[1px] w-[118px]" />
          <SheetTab label="Step–by–step & draw sch" className="-ml-[1px] w-[254px]" />
          <div className="ml-[1px] h-full w-[37px] drop-shadow-[1px_1px_1px_rgba(40,50,60,.8)]">
            <div className="flex h-full items-center bg-[#dcdcdc] pl-[9px] [clip-path:polygon(0_0,100%_0,calc(100%-4px)_10px,calc(100%-14px)_100%,4px_100%,0_calc(100%-4px))]">
              <svg width="13" height="13" viewBox="0 0 13 13"><path d="M6.500 0v13M0 6.500h13" stroke="#555" strokeWidth="2.600" /></svg>
            </div>
          </div>
          <div className="ml-auto flex w-[883px] items-center">
            <div className="h-full w-[8px] border-r border-[#a3a3a3] bg-[#e0e0e0]" />
            <div className="flex h-full w-[831px] items-center border-t-2 border-[#a3a3a3] bg-[#fafafa] pl-[3px]">
              <div className="h-[13px] w-[378px] rounded-full bg-[#c1c1c1]" />
            </div>
            <div className="flex h-full w-[21px] items-center justify-center gap-[3px] border-x-2 border-t-2 border-[#a3a3a3] bg-white">
              <div className="h-[15px] w-[2px] bg-[#b0b0b0]" />
              <div className="h-[15px] w-[2px] bg-[#b0b0b0]" />
            </div>
            <div className="h-full flex-1 bg-[#fafafa]" />
          </div>
        </div>
        <div className="mb-[3px] flex h-[25px] items-center bg-gradient-to-b from-[#f4f5f6] from-50% to-[#e4e6e8] to-50% text-[16.500px] leading-[28px] *:h-full *:border-r *:border-[#b9b9b9]">
          <div className="w-[150px] pl-[5px]">Normal View</div>
          <div className="w-[603px] pl-[10px]">Ready</div>
          <div className="w-[253px]" />
          <div className="flex w-[223px] items-center pl-[5px]">
            Sum=0
            <svg width="15" height="9" viewBox="0 0 15 9" className="mr-[9px] ml-auto"><path d="M0 0h15L7.500 9z" fill="#111" /></svg>
          </div>
          <div className="w-[56px]" />
          <div className="w-[54px]" />
          <div className="w-[45px]" />
        </div>
      </div>
    </div>
  );
}

export default function App() {
  return (
    <div className="flex h-[1440px] w-[2304px] flex-col overflow-hidden bg-black">
      <Toolbar />
      <Tabs />
      <Ribbon />
      <FormulaBar />
      <div className="flex h-[1149px] shrink-0 overflow-hidden bg-white">
        <div className="flex w-[2279px] flex-col">
          <ColumnHeads />
          <Sheet />
        </div>
        <VScroll />
      </div>
      <Bottom />
    </div>
  );
}
